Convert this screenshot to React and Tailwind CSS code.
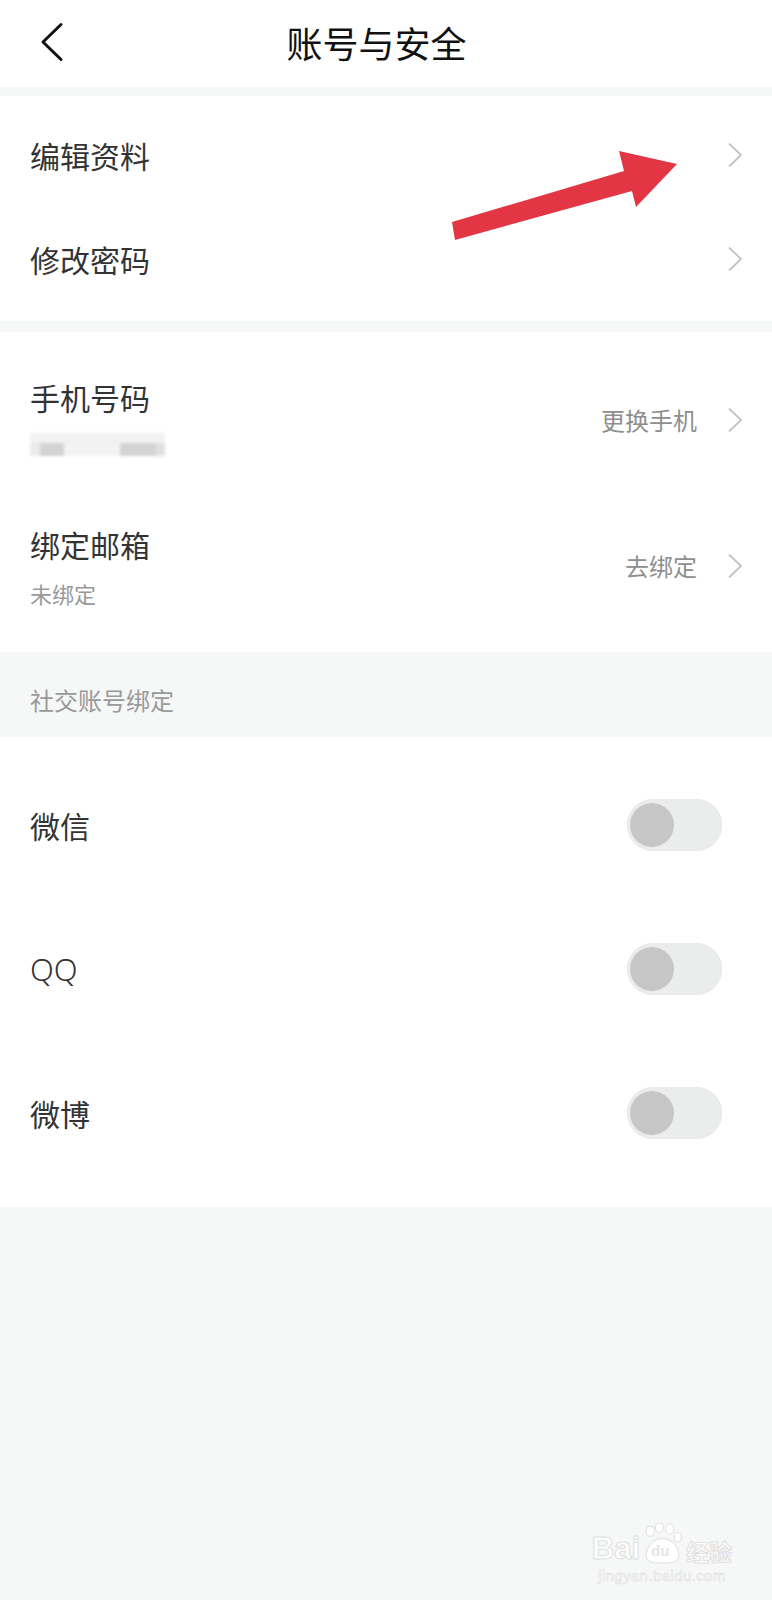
import React from "react";

const FONT = { fontFamily: '"Noto Sans CJK SC", "Noto Sans", sans-serif' };

function Chevron() {
  return (
    <svg width="16" height="26" viewBox="0 0 16 26" className="shrink-0">
      <polyline points="2,1.5 14,13 2,24.5" fill="none" stroke="#c2c2c2" strokeWidth="1.8" strokeLinejoin="miter" />
    </svg>
  );
}

function Toggle() {
  return (
    <div className="w-[95px] h-[52px] rounded-full bg-[#ebecec] flex items-center pl-[3px] shadow-[inset_0_0_0_1px_#e8e9e9]">
      <div className="w-[44px] h-[44px] rounded-full bg-[#c6c6c6] shadow-[0_0_0_1px_#ececec]" />
    </div>
  );
}

function NavRow({ label }) {
  return (
    <div className="h-[104px] flex items-center pl-[30px] pr-[29px]">
      <div className="flex-1 text-[30px] leading-[40px] text-[#333]">{label}</div>
      <Chevron />
    </div>
  );
}

function SwitchRow({ label, latin }) {
  return (
    <div className="h-[144px] flex items-center pl-[30px] pr-[50px]">
      <div
        className={
          latin
            ? "flex-1 text-[31px] leading-[40px] font-light text-[#333] [font-family:'Noto_Sans',sans-serif]"
            : "flex-1 text-[30px] leading-[40px] text-[#333]"
        }
      >
        {label}
      </div>
      <Toggle />
    </div>
  );
}

function Watermark() {
  return (
    <div className="absolute right-[40px] bottom-[15px] flex flex-col items-center select-none">
      <div className="flex items-end">
        <span className="text-[31px] leading-[30px] font-bold text-white [-webkit-text-stroke:1px_#e0e0e0] [font-family:'Liberation_Sans',sans-serif]">
          Bai
        </span>
        <div className="relative w-[45px] h-[41px]">
          <svg width="45" height="41" viewBox="0 0 44 40" className="absolute inset-0">
            <ellipse cx="10" cy="8" rx="4" ry="5" fill="#fff" stroke="#e0e0e0" strokeWidth="1" />
            <ellipse cx="19" cy="4.5" rx="4" ry="4.5" fill="#fff" stroke="#e0e0e0" strokeWidth="1" />
            <ellipse cx="29" cy="6" rx="4" ry="5" fill="#fff" stroke="#e0e0e0" strokeWidth="1" />
            <ellipse cx="37" cy="14" rx="3.5" ry="4.5" fill="#fff" stroke="#e0e0e0" strokeWidth="1" />
            <path d="M6 32 C6 22 14 15 22 15 C30 15 38 22 38 32 C38 38 32 39 22 39 C12 39 6 38 6 32 Z" fill="#fff" stroke="#e0e0e0" strokeWidth="1" />
          </svg>
          <span className="absolute left-[11px] top-[20px] text-[15px] leading-[16px] font-bold text-[#e6e6e6] [font-family:'Liberation_Sans',sans-serif]">
            du
          </span>
        </div>
        <span className="text-[23px] leading-[26px] font-bold text-white [-webkit-text-stroke:1px_#e0e0e0] ml-[1px]" style={FONT}>
          经验
        </span>
      </div>
      <div className="text-[15px] leading-[18px] mt-[3px] text-white [-webkit-text-stroke:0.6px_#e0e0e0] [font-family:'Liberation_Sans',sans-serif] tracking-[0.4px]">
        jingyan.baidu.com
      </div>
    </div>
  );
}

export default function App() {
  return (
    <div className="relative w-[772px] min-h-[1600px] bg-[#f6f7f7]" style={FONT}>
      {/* Header */}
      <div className="h-[87px] bg-white relative flex items-center justify-center pr-[19px]">
        <svg width="24" height="40" viewBox="0 0 24 40" className="absolute left-[40px] top-[22px]">
          <polyline points="21,2.5 3,20 21,37.5" fill="none" stroke="#111" strokeWidth="3" strokeLinecap="round" strokeLinejoin="round" />
        </svg>
        <div className="text-[36px] leading-[44px] text-[#111] mt-[-3px]">账号与安全</div>
      </div>

      <div className="h-[9px]" />

      {/* Section 1 */}
      <div className="bg-white pt-[7px] pb-[10px] relative">
        <NavRow label="编辑资料" />
        <NavRow label="修改密码" />
        {/* annotation arrow */}
        <svg width="772" height="225" viewBox="0 96 772 225" className="absolute left-0 top-0 pointer-events-none">
          <polygon
            points="452,222 624,171 619,151 677,164 636,207 632,191 455,240"
            fill="#e23645"
          />
        </svg>
      </div>

      <div className="h-[11px]" />

      {/* Section 2 */}
      <div className="bg-white pt-[15px] pb-[13px]">
        <div className="h-[146px] flex items-center pl-[30px] pr-[29px]">
          <div className="flex-1 flex flex-col pb-[8px]">
            <div className="text-[30px] leading-[40px] text-[#333]">手机号码</div>
            <div className="mt-[16px] w-[135px] h-[23px] flex flex-col blur-[1.5px]">
              <div className="h-[10px] bg-[#f2f2f2]" />
              <div className="h-[13px] flex bg-[#eeeeee]">
                <div className="w-[10px] bg-[#ebebeb]" />
                <div className="w-[24px] bg-[#d3d3d3]" />
                <div className="w-[56px] bg-[#f3f3f3]" />
                <div className="w-[36px] bg-[#d4d4d4]" />
                <div className="w-[9px] bg-[#e0e0e0]" />
              </div>
            </div>
          </div>
          <div className="flex items-center gap-[30px]">
            <span className="text-[24px] leading-[30px] text-[#8e8e8e]">更换手机</span>
            <Chevron />
          </div>
        </div>
        <div className="h-[146px] flex items-center pl-[30px] pr-[29px]">
          <div className="flex-1 flex flex-col">
            <div className="text-[30px] leading-[40px] text-[#333]">绑定邮箱</div>
            <div className="mt-[14px] text-[22px] leading-[30px] text-[#999]">未绑定</div>
          </div>
          <div className="flex items-center gap-[30px]">
            <span className="text-[24px] leading-[30px] text-[#8e8e8e]">去绑定</span>
            <Chevron />
          </div>
        </div>
      </div>

      {/* Section header */}
      <div className="h-[85px] flex items-center pl-[30px] pt-[10px]">
        <span className="text-[24px] leading-[30px] text-[#999]">社交账号绑定</span>
      </div>

      {/* Section 3 */}
      <div className="bg-white pt-[16px] pb-[22px]">
        <SwitchRow label="微信" />
        <SwitchRow label="QQ" latin />
        <SwitchRow label="微博" />
      </div>

      <Watermark />
    </div>
  );
}
